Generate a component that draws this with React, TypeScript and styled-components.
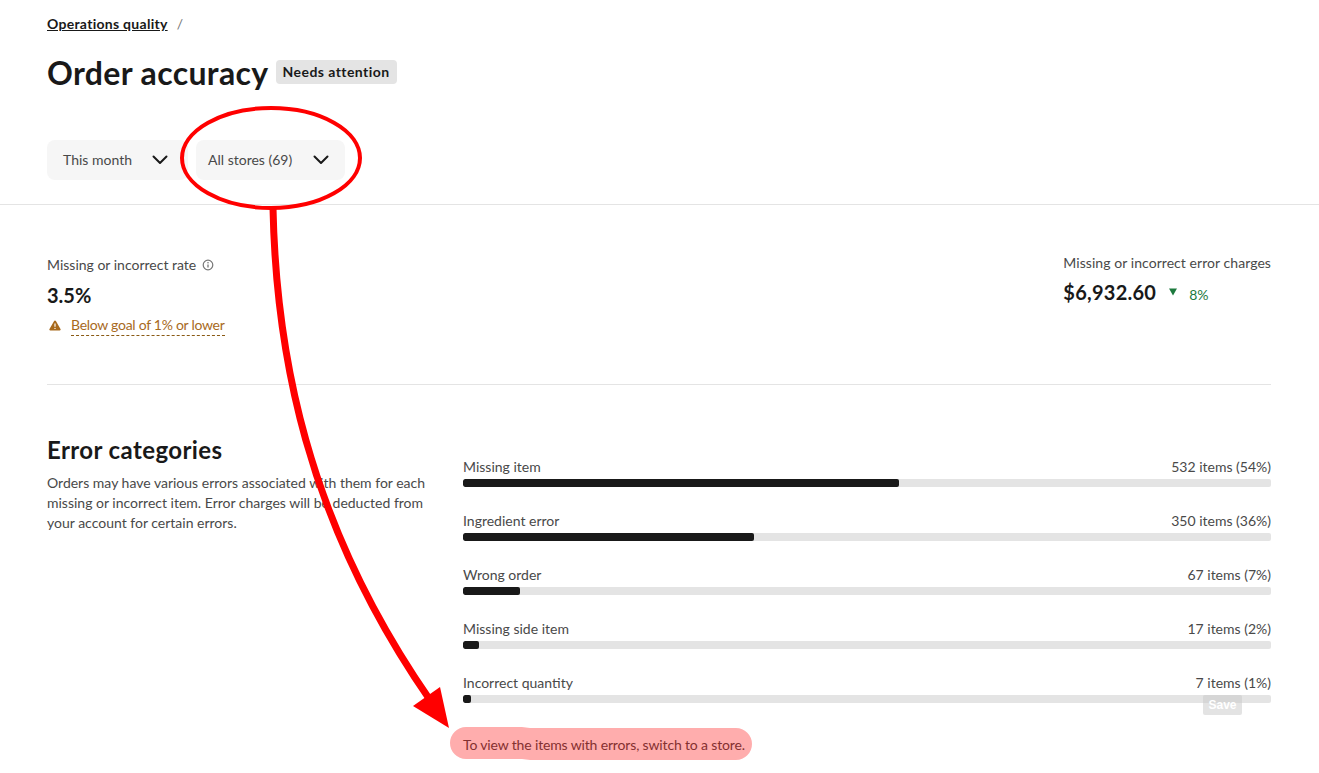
import styled, { createGlobalStyle } from "styled-components";

const GlobalStyle = createGlobalStyle`
  html, body {
    margin: 0;
    padding: 0;
    background: #fff;
  }
  body {
    font-family: "Lato", "Liberation Sans", sans-serif;
    color: #191919;
  }
`;

const Page = styled.div`
  position: relative;
  width: 1319px;
  height: 773px;
  overflow: hidden;
`;

const Header = styled.header`
  padding: 15px 48px 24px 47px;
  border-bottom: 1px solid #e4e4e4;
`;

const Breadcrumb = styled.div`
  display: flex;
  align-items: center;
  gap: 9px;
  height: 18px;
  font-size: 14px;
  line-height: 18px;
  a {
    color: #191919;
    font-weight: 700;
    letter-spacing: 0.28px;
    text-decoration: underline;
  }
  span {
    color: #767676;
  }
`;

const TitleRow = styled.div`
  display: flex;
  align-items: flex-start;
  gap: 7px;
  margin-top: 20px;
  margin-bottom: 47px;
`;

const Title = styled.h1`
  margin: 0;
  font-size: 32px;
  line-height: 40px;
  font-weight: 700;
  letter-spacing: 0.36px;
`;

const Badge = styled.span`
  margin-top: 7px;
  padding: 0 7px;
  height: 24px;
  line-height: 24px;
  background: #e4e4e4;
  border-radius: 4px;
  font-size: 14px;
  font-weight: 700;
  letter-spacing: 0.44px;
`;

const Filters = styled.div`
  display: flex;
  gap: 8px;
`;

const Select = styled.button<{ $width: number; $left: number; $right: number }>`
  display: flex;
  align-items: center;
  justify-content: space-between;
  width: ${(p) => p.$width}px;
  height: 40px;
  padding: 0 ${(p) => p.$right}px 1px ${(p) => p.$left}px;
  border: 0;
  border-radius: 8px;
  background: #f6f6f6;
  color: #494949;
  font: 400 14px "Lato", "Liberation Sans", sans-serif;
`;

const Content = styled.main`
  padding: 0 48px 0 47px;
`;

const Stats = styled.section`
  display: flex;
  justify-content: space-between;
  height: 180px;
  padding-top: 50px;
  box-sizing: border-box;
  border-bottom: 1px solid #e4e4e4;
`;

const StatLabel = styled.div`
  display: flex;
  align-items: center;
  gap: 6px;
  height: 20px;
  font-size: 14px;
  line-height: 20px;
  color: #494949;
`;

const StatValue = styled.div`
  margin-top: 8px;
  font-size: 20px;
  line-height: 24px;
  font-weight: 700;
`;

const Warning = styled.div`
  display: flex;
  align-items: center;
  gap: 10px;
  margin-top: 8px;
  padding-left: 2px;
  font-size: 14px;
  line-height: 20px;
  color: #a86a1d;
  span {
    letter-spacing: -0.28px;
    border-bottom: 1px dashed #8a5a14;
  }
`;

const ChargesBlock = styled.div`
  margin-top: -2px;
`;

const ChargesLabel = styled(StatLabel)`
  letter-spacing: 0.06px;
`;

const ChargesRow = styled.div`
  display: flex;
  align-items: center;
  margin-top: 7px;
`;

const Charges = styled(StatValue)`
  margin-top: 0;
  letter-spacing: 0.25px;
`;

const Delta = styled.span`
  display: flex;
  align-items: center;
  gap: 12px;
  margin-left: 13px;
  padding-top: 5px;
  font-size: 14px;
  color: #1d7a3e;
  svg {
    margin-top: -5px;
  }
`;

const Categories = styled.section`
  display: grid;
  grid-template-columns: 416px 808px;
  padding-top: 50px;
`;

const CategoryIntro = styled.div`
  padding-right: 30px;
  h2 {
    margin: 0 0 8px;
    font-size: 24px;
    line-height: 30px;
    font-weight: 700;
    letter-spacing: 0.4px;
  }
  p {
    margin: 0;
    font-size: 14px;
    line-height: 20px;
    color: #494949;
  }
`;

const Bars = styled.div`
  display: flex;
  flex-direction: column;
  gap: 25px;
  padding-top: 23px;
`;

const BarHead = styled.div`
  display: flex;
  justify-content: space-between;
  height: 20px;
  margin-top: -1px;
  margin-bottom: 2px;
  font-size: 14px;
  line-height: 20px;
  color: #494949;
`;

const Track = styled.div`
  height: 8px;
  background: #e4e4e4;
  border-radius: 2px;
  overflow: hidden;
`;

const Fill = styled.div`
  height: 100%;
  background: #191919;
  border-radius: 2px;
`;

const Hint = styled.p`
  margin: 32px 0 0 416px;
  font-size: 14px;
  line-height: 20px;
  letter-spacing: -0.15px;
  color: #494949;
`;

const SaveGhost = styled.div`
  position: absolute;
  left: 1203px;
  top: 695px;
  width: 39px;
  height: 20px;
  border-radius: 2px;
  background: rgba(200, 200, 200, 0.5);
  color: #fff;
  font: 700 12px/20px "Liberation Sans", sans-serif;
  text-align: center;
`;

const Annotation = styled.svg`
  position: absolute;
  left: 0;
  top: 0;
  pointer-events: none;
`;

const rows = [
  { name: "Missing item", value: "532 items (54%)", pct: 54 },
  { name: "Ingredient error", value: "350 items (36%)", pct: 36 },
  { name: "Wrong order", value: "67 items (7%)", pct: 7 },
  { name: "Missing side item", value: "17 items (2%)", pct: 2 },
  { name: "Incorrect quantity", value: "7 items (1%)", pct: 1 },
];

function Chevron() {
  return (
    <svg width="16" height="10" viewBox="0 0 16 10" fill="none">
      <path d="M1.5 1.5 8 8l6.5-6.5" stroke="#191919" strokeWidth="2" strokeLinecap="round" strokeLinejoin="round" />
    </svg>
  );
}

export default function App() {
  return (
    <Page>
      <GlobalStyle />
      <Header>
        <Breadcrumb>
          <a>Operations quality</a>
          <span>/</span>
        </Breadcrumb>
        <TitleRow>
          <Title>Order accuracy</Title>
          <Badge>Needs attention</Badge>
        </TitleRow>
        <Filters>
          <Select $width={141} $left={16} $right={20}>
            This month
            <Chevron />
          </Select>
          <Select $width={149} $left={12} $right={16}>
            All stores (69)
            <Chevron />
          </Select>
        </Filters>
      </Header>
      <Content>
        <Stats>
          <div>
            <StatLabel>
              Missing or incorrect rate
              <svg width="12" height="12" viewBox="0 0 12 12" fill="none">
                <circle cx="6" cy="6" r="4.8" stroke="#767676" strokeWidth="1.2" />
                <path d="M6 5.4v3" stroke="#767676" strokeWidth="1.3" />
                <circle cx="6" cy="3.7" r=".8" fill="#767676" />
              </svg>
            </StatLabel>
            <StatValue>3.5%</StatValue>
            <Warning>
              <svg width="12" height="11" viewBox="0 0 12 11">
                <path d="M6 .6c.4 0 .7.2.9.5l4.6 8c.4.7 0 1.4-.8 1.4H1.3c-.8 0-1.2-.7-.8-1.4l4.6-8c.2-.3.5-.5.9-.5Z" fill="#a86a1d" />
                <path d="M6 3.4v3.4" stroke="#fff" strokeWidth="1.2" />
                <circle cx="6" cy="8.4" r=".7" fill="#fff" />
              </svg>
              <span>Below goal of 1% or lower</span>
            </Warning>
          </div>
          <ChargesBlock>
            <ChargesLabel>Missing or incorrect error charges</ChargesLabel>
            <ChargesRow>
              <Charges>$6,932.60</Charges>
              <Delta>
                <svg width="8" height="8" viewBox="0 0 8 8">
                  <path d="M0 .5h8L4 7.5Z" fill="#1d7a3e" />
                </svg>
                8%
              </Delta>
            </ChargesRow>
          </ChargesBlock>
        </Stats>
        <Categories>
          <CategoryIntro>
            <h2>Error categories</h2>
            <p>
              Orders may have various errors associated with them for each missing or incorrect item. Error charges
              will be deducted from your account for certain errors.
            </p>
          </CategoryIntro>
          <Bars>
            {rows.map((row) => (
              <div key={row.name}>
                <BarHead>
                  <span>{row.name}</span>
                  <span>{row.value}</span>
                </BarHead>
                <Track>
                  <Fill style={{ width: `${row.pct}%` }} />
                </Track>
              </div>
            ))}
          </Bars>
        </Categories>
        <Hint>To view the items with errors, switch to a store.</Hint>
      </Content>
      <SaveGhost>Save</SaveGhost>
      <Annotation width="1319" height="773" viewBox="0 0 1319 773" fill="none">
        <path
          d="M466 727H522L530 728H736A16 16 0 0 1 736 760H530L522 759H466A16 16 0 0 1 466 727Z"
          fill="#ff0000"
          fillOpacity="0.32"
        />
        <ellipse cx="271" cy="158" rx="89" ry="50" stroke="#ff0000" strokeWidth="4" />
        <path d="M273 208C276 350 305 520 430 700" stroke="#ff0000" strokeWidth="7" />
        <path d="M440 687 413 706 449 728Z" fill="#ff0000" />
      </Annotation>
    </Page>
  );
}
